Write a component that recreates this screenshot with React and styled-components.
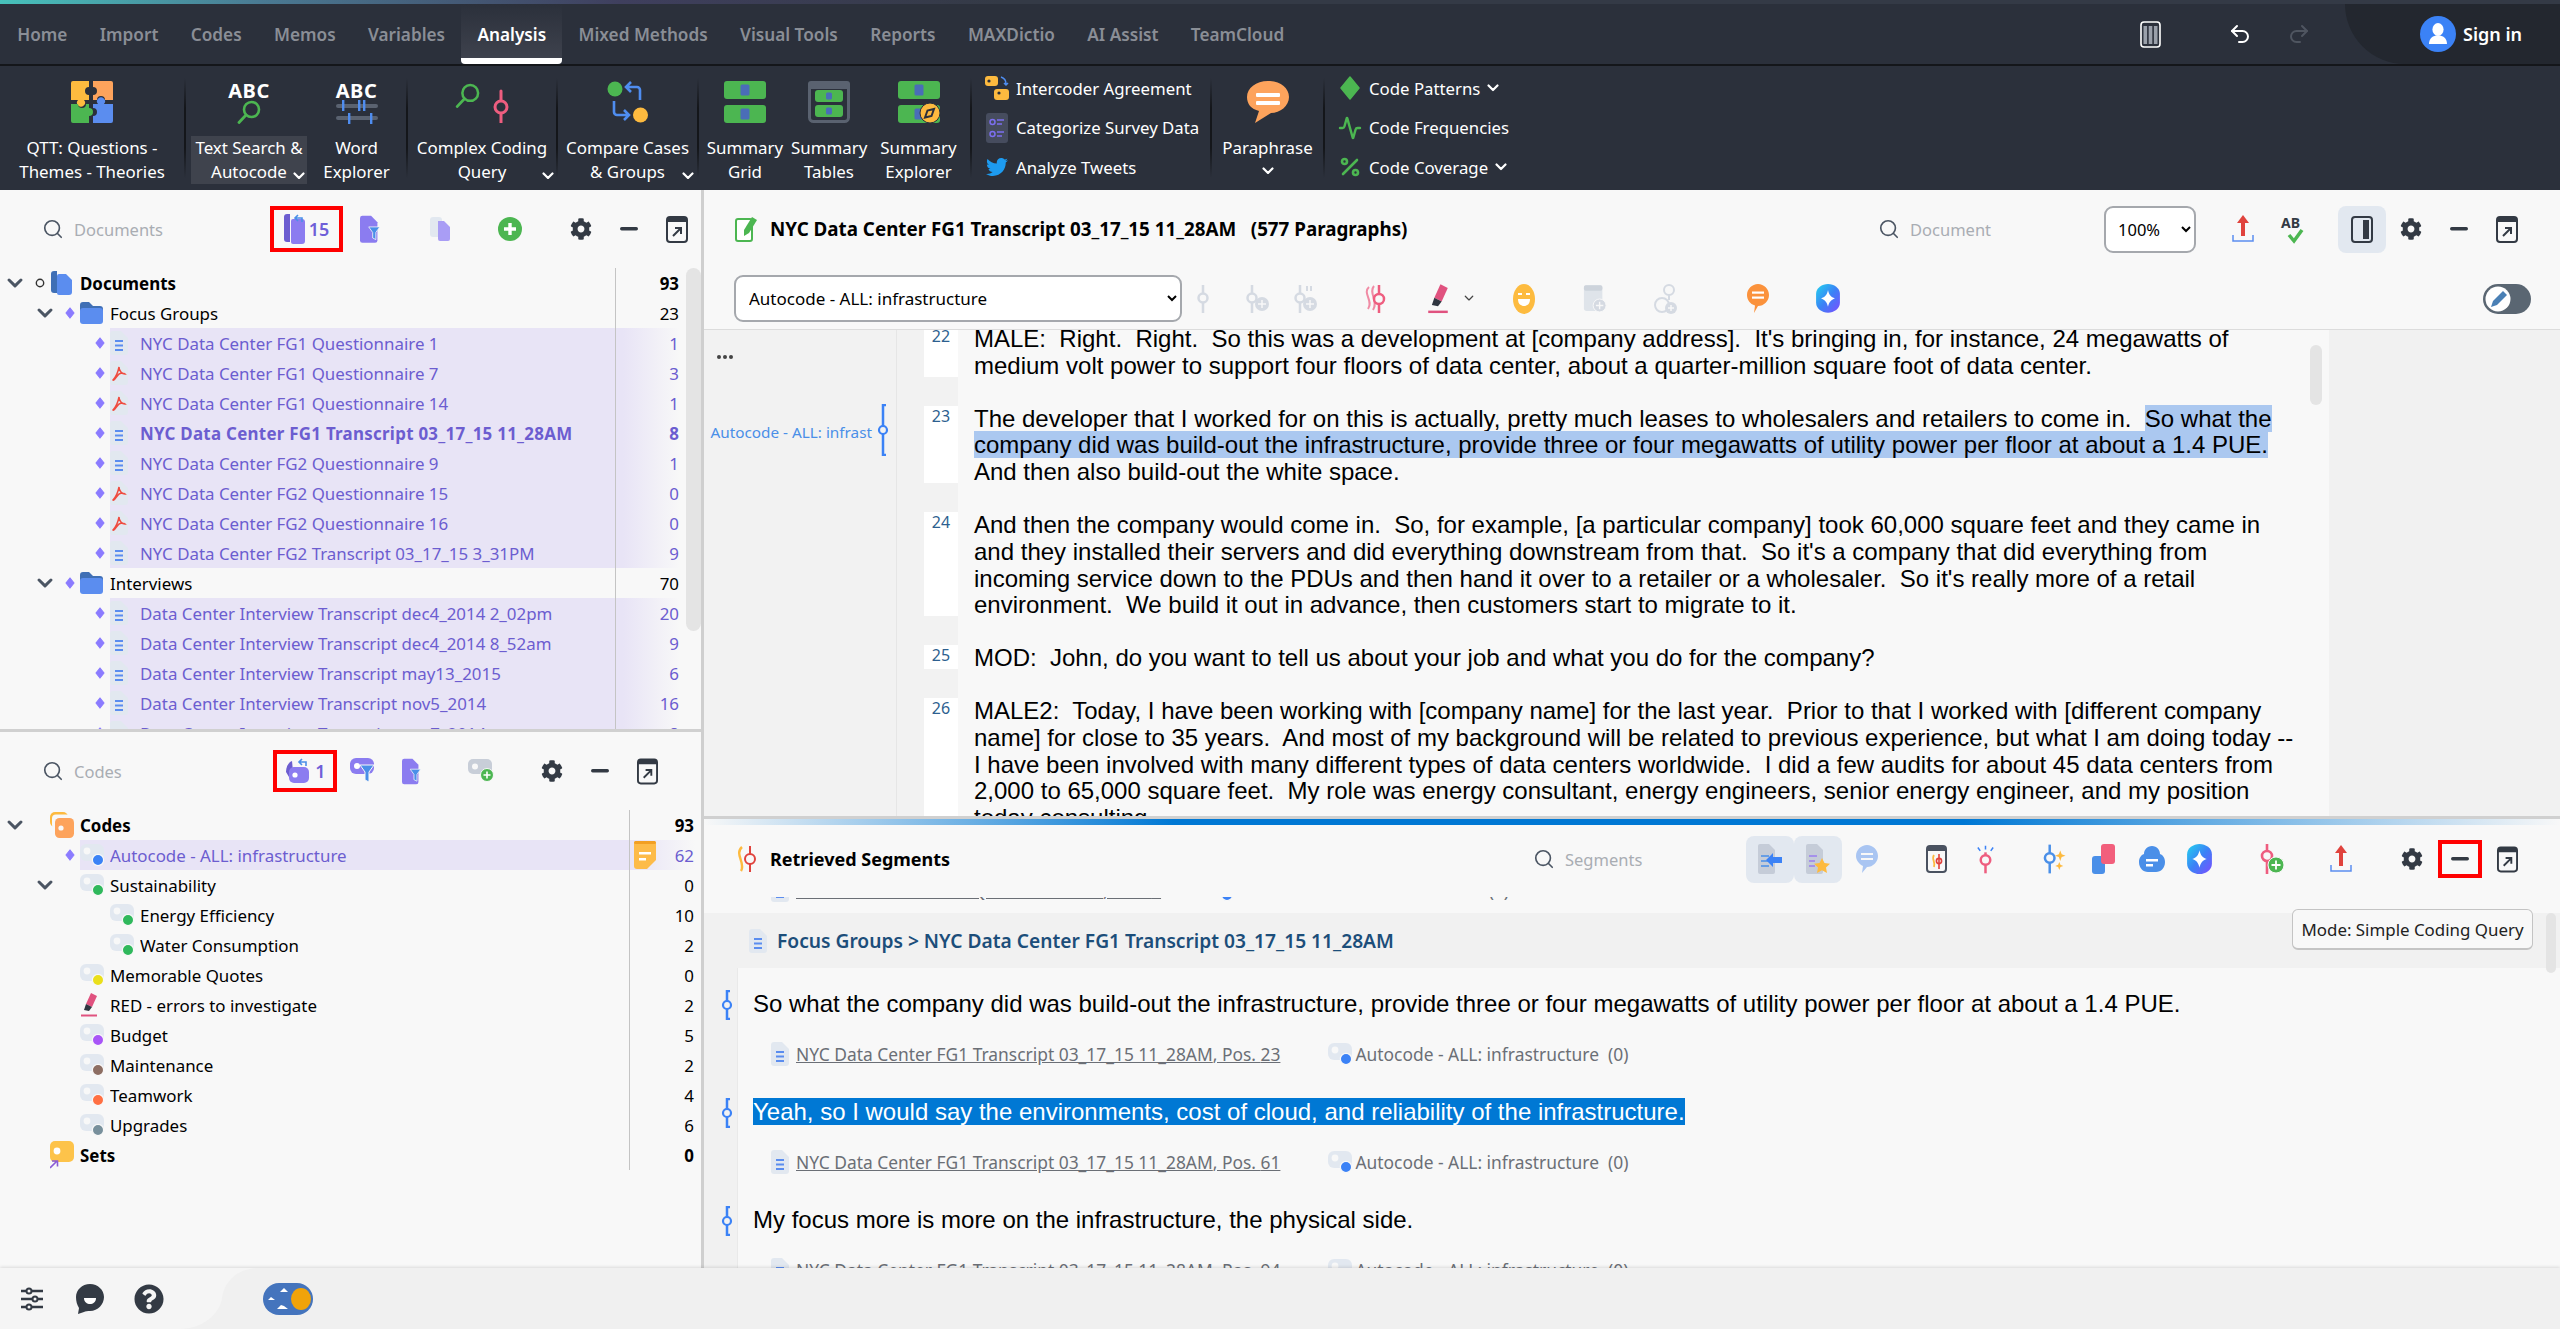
import React from 'react';
import styled, { createGlobalStyle } from 'styled-components';
import { FaCog, FaTwitter, FaQuestionCircle } from 'react-icons/fa';
import { Search, Undo2, Redo2, Activity, Percent } from 'lucide-react';

const UI = '"Noto Sans", "Open Sans", sans-serif';
const DOC = '"Liberation Sans", Arial, sans-serif';

const GlobalStyle = createGlobalStyle`
  html, body { margin: 0; padding: 0; height: 100%; overflow: hidden; }
  body { font-family: ${UI}; background: #f8f8f8; color: #000; }
  #root { height: 100%; }
  * { box-sizing: border-box; }
`;

const Page = styled.div`
  display: flex;
  flex-direction: column;
  height: 100vh;
  overflow: hidden;
`;

const Accent = styled.div`
  height: 4px;
  flex: none;
  background: linear-gradient(90deg, #47c1bb 0, #4a7a93 260px, #3f3f5e 620px, #343a46 1000px);
`;

const TabBar = styled.nav`
  height: 60px;
  flex: none;
  display: flex;
  align-items: stretch;
  background: #2b303b;
  padding-left: 1px;
`;

const Tab = styled.a`
  display: flex;
  align-items: center;
  padding: 6px 16.2px 0;
  font-size: 17.2px;
  font-weight: 600;
  color: ${p => (p.$active ? '#fff' : '#8a8e96')};
  border-bottom: 6px solid ${p => (p.$active ? '#fff' : 'transparent')};
  border-radius: ${p => (p.$active ? '0 0 4px 4px' : '0')};
  background: ${p => (p.$active ? 'linear-gradient(180deg, #2b303b, #3e424d)' : 'none')};
`;

const TabActions = styled.div`
  margin-left: auto;
  display: flex;
  align-items: center;
`;

const TabAction = styled.span`
  display: flex;
  margin-right: ${p => p.$mr}px;
  color: ${p => p.$color || '#fff'};
`;

const SignIn = styled.div`
  width: 215px;
  height: 60px;
  display: flex;
  align-items: center;
  padding-left: 75px;
  gap: 7px;
  background: #23272f;
  border-bottom-left-radius: 60px;
  color: #fff;
  font-weight: 600;
  font-size: 18px;
`;

const Ribbon = styled.div`
  height: 126px;
  flex: none;
  display: flex;
  background: #2b303b;
  border-top: 2px solid #14161a;
  color: #fff;
`;

const Sep = styled.div`
  width: 2px;
  margin: 12px 0;
  background: linear-gradient(180deg, #2b303b, #14161a 30%, #14161a 70%, #2b303b);
`;

const RibbonBtn = styled.div`
  position: relative;
  width: ${p => p.$w}px;
  margin-left: ${p => p.$ml || 0}px;
  display: flex;
  flex-direction: column;
  align-items: center;
  padding-top: 15px;
`;

const RibbonIcon = styled.div`
  height: 55px;
  display: flex;
  flex-direction: column;
  align-items: center;
`;

const AbcMark = styled.span`
  font-size: 20px;
  font-weight: 700;
  line-height: 19px;
  color: #fff;
  letter-spacing: 0.5px;
`;

const RibbonLabel = styled.div`
  align-self: stretch;
  height: 48px;
  font-size: 16.9px;
  line-height: 24px;
  text-align: center;
  white-space: nowrap;
  background: ${p => (p.$active ? '#3f434d' : 'none')};
`;

const LabelChevron = styled.span`
  position: absolute;
  right: ${p => p.$r}px;
  bottom: 11px;
  display: flex;
`;

const CenterChevron = styled.div`
  display: flex;
  justify-content: center;
  padding-top: 7px;
`;

const RibbonList = styled.div`
  display: flex;
  flex-direction: column;
  width: ${p => p.$w}px;
  padding: 10px 0 0 13px;
  gap: 15.5px;
`;

const RibbonItem = styled.div`
  height: 24px;
  display: flex;
  align-items: center;
  gap: 7px;
  font-size: 16.8px;
  white-space: nowrap;
`;

const RibbonItemIcon = styled.span`
  width: 24px;
  height: 24px;
  display: flex;
  align-items: center;
  justify-content: center;
`;

const Main = styled.div`
  flex: 1;
  min-height: 0;
  display: flex;
`;

const LeftColumn = styled.div`
  width: 704px;
  flex: none;
  display: flex;
  flex-direction: column;
  border-right: 3px solid #cfcfcf;
`;

const Pane = styled.section`
  height: ${p => p.$h}px;
  flex: ${p => (p.$h ? 'none' : '1')};
  min-height: 0;
  display: flex;
  flex-direction: column;
  overflow: hidden;
  position: relative;
`;

const HSplit = styled.div`
  height: 3px;
  flex: none;
  background: #d0d0d0;
`;

const PaneHeader = styled.header`
  height: ${p => p.$h}px;
  flex: none;
  display: flex;
  align-items: center;
  padding-left: ${p => p.$pl || 0}px;
  padding-right: ${p => p.$pr || 0}px;
  padding-bottom: ${p => p.$pb || 0}px;
  background: #f8f8f8;
`;

const SearchBox = styled.div`
  width: ${p => p.$w}px;
  flex: none;
  display: flex;
  align-items: center;
  gap: 10px;
  padding-left: ${p => p.$pl || 0}px;
  font-size: 16.5px;
  color: #a9adb3;
`;

const Tool = styled.span`
  width: ${p => p.$w || 24}px;
  margin-left: ${p => p.$ml || 0}px;
  flex: none;
  display: flex;
  justify-content: center;
  align-items: center;
  color: #333a44;
`;

const RedBox = styled.span`
  width: ${p => p.$w}px;
  height: ${p => p.$h}px;
  margin-left: ${p => p.$ml || 0}px;
  flex: none;
  display: flex;
  align-items: center;
  justify-content: center;
  gap: 3px;
  border: 4px solid #f00;
  font-size: 18px;
  font-weight: 600;
  color: #6f5fd8;
`;

const Tree = styled.div`
  flex: 1;
  min-height: 0;
  overflow: hidden;
  padding-right: 6px;
`;

const TreeWrap = styled.div`
  flex: 1;
  min-height: 0;
  display: flex;
`;

const ScrollTrack = styled.div`
  width: 15px;
  flex: none;
`;

const ScrollThumb = styled.div`
  height: ${p => p.$h}px;
  margin-top: ${p => p.$mt || 0}px;
  border-radius: 8px;
  background: #e4e4e4;
`;

const Row = styled.div`
  height: 30px;
  display: flex;
  align-items: stretch;
  padding-left: ${p => p.$level * 30}px;
  font-size: 16.9px;
`;

const ChevronSlot = styled.span`
  width: 30px;
  flex: none;
  display: flex;
  align-items: center;
  justify-content: center;
`;

const BulletSlot = styled.span`
  width: 20px;
  flex: none;
  display: flex;
  align-items: center;
  justify-content: center;
`;

const RowBody = styled.div`
  flex: 1;
  min-width: 0;
  display: flex;
  align-items: center;
  background: ${p => (p.$selected ? 'linear-gradient(90deg, #e8e4f6 90%, #f8f8f8)' : 'none')};
`;

const RowIcon = styled.span`
  width: 30px;
  flex: none;
  display: flex;
  align-items: center;
`;

const RowLabel = styled.span`
  flex: 1;
  min-width: 0;
  white-space: nowrap;
  overflow: hidden;
  font-weight: ${p => (p.$bold ? 700 : 400)};
  letter-spacing: ${p => (p.$bold && p.$selected ? '0.28px' : '0')};
  color: ${p => (p.$selected ? '#6c5dd0' : '#000')};
`;

const Count = styled.span`
  width: ${p => p.$w}px;
  height: 100%;
  flex: none;
  display: flex;
  align-items: center;
  justify-content: space-between;
  padding: 0 1px 0 4px;
  border-left: 1px solid #c4c4c4;
  font-weight: ${p => (p.$bold ? 700 : 400)};
  color: ${p => (p.$selected ? '#6c5dd0' : '#000')};
`;

const CountValue = styled.span`
  margin-left: auto;
`;

const RightColumn = styled.div`
  flex: 1;
  min-width: 0;
  display: flex;
  flex-direction: column;
`;

const TitleGroup = styled.div`
  flex: 1;
  min-width: 0;
  display: flex;
  align-items: center;
  gap: 13px;
  font-size: 18.8px;
  font-weight: 700;
  white-space: pre;
`;

const ZoomSelect = styled.select`
  width: 92px;
  height: 47px;
  flex: none;
  padding-left: 8px;
  border: 2px solid #a5a8ad;
  border-radius: 9px;
  background: #fff;
  font-family: ${UI};
  font-size: 16.5px;
`;

const CodeSelect = styled(ZoomSelect)`
  width: 448px;
  padding-left: 9px;
  font-size: 17px;
`;

const PanelBtn = styled.span`
  width: 48px;
  height: 47px;
  margin-left: ${p => p.$ml || 0}px;
  flex: none;
  display: flex;
  align-items: center;
  justify-content: center;
  border-radius: 8px;
  background: #e2e8f0;
`;

const ToolbarEnd = styled.span`
  margin-left: auto;
  display: flex;
`;

const CodingBar = styled(PaneHeader)`
  border-bottom: 1px solid #dcdcdc;
`;

const DocArea = styled.div`
  flex: 1;
  min-height: 0;
  display: flex;
  overflow: hidden;
`;

const Gutter = styled.aside`
  width: 193px;
  flex: none;
  background: #f2f2f2;
  border-right: 1px solid #e6e6e6;
  display: flex;
  flex-direction: column;
`;

const MoreDots = styled.div`
  display: flex;
  gap: 2px;
  padding: 25px 0 0 13px;
`;

const Dot = styled.span`
  width: 4px;
  height: 4px;
  border-radius: 50%;
  background: #444;
`;

const CodeMark = styled.div`
  margin-top: 45px;
  height: 52px;
  display: flex;
  align-items: center;
  justify-content: flex-end;
  padding-right: 6px;
  font-size: 15.3px;
  color: #4a8fe8;
  white-space: nowrap;
  overflow: hidden;
`;

const MarkText = styled.span`
  padding-top: 3px;
  margin-right: 4px;
`;

const DocBody = styled.div`
  flex: 1;
  min-width: 0;
  background: linear-gradient(90deg, #f2f2f2 61px, #f8f8f8 61px);
`;

const Paragraph = styled.div`
  display: flex;
  padding-left: 27px;
  margin-top: ${p => p.$mt || 0}px;
  margin-bottom: 26px;
`;

const ParaNumber = styled.div`
  width: 34px;
  flex: none;
  margin-bottom: 3px;
  background: #fff;
  text-align: center;
  font-size: 16px;
  line-height: 20px;
  color: #2d5f8f;
`;

const ParaText = styled.div`
  padding-left: 16px;
  font-family: ${DOC};
  font-size: 24px;
  line-height: 26.8px;
  white-space: pre;
`;

const Line = styled.div``;

const Hl = styled.span`
  background: #abc8f0;
`;

const DocScroll = styled.div`
  width: 21px;
  flex: none;
  padding: 15px 7px 0 2px;
  background: #f8f8f8;
`;

const DocMargin = styled.div`
  width: 231px;
  flex: none;
  background: #f1f1f1;
`;

const BlueSplit = styled.div`
  flex: none;
  height: 9px;
  border-top: 3px solid #d0d0d0;
  background: linear-gradient(90deg, #f8f8f8 0, #0078d4 470px, #0078d4 1260px, #f8f8f8 100%);
`;

const SegTitle = styled.span`
  flex: 1;
  display: flex;
  align-items: center;
  gap: 11px;
  font-size: 18px;
  font-weight: 700;
`;

const SegList = styled.div`
  flex: 1;
  min-height: 0;
  overflow: hidden;
  position: relative;
`;

const SegStrip = styled.div`
  height: 16px;
  overflow: hidden;
  padding-left: 49px;
`;

const SegGroupHeader = styled.div`
  height: 55px;
  display: flex;
  align-items: center;
  gap: 10px;
  padding-left: 45px;
  background: #f1f1f1;
  font-size: 19.2px;
  font-weight: 600;
  color: #1c4e7a;
`;

const Segment = styled.div`
  display: flex;
  background: linear-gradient(90deg, #f1f1f1 33px, #e9e9e9 33px, #e9e9e9 34px, #f8f8f8 34px);
  height: ${p => p.$h || 108}px;
`;

const SegMarker = styled.span`
  width: 34px;
  flex: none;
  display: flex;
  padding: 22px 0 0 16px;
  height: 60px;
`;

const SegContent = styled.div`
  flex: 1;
  min-width: 0;
  padding: 23px 0 0 15px;
`;

const SegText = styled.div`
  font-family: ${DOC};
  font-size: 24px;
  line-height: 26.8px;
  white-space: pre;
`;

const SelectedText = styled.span`
  background: #0078d4;
  color: #fff;
`;

const SegMeta = styled.div`
  display: flex;
  align-items: center;
  height: 28px;
  margin-top: ${p => p.$mt || 0}px;
  padding-left: 18px;
  font-size: 17.4px;
  color: #6b6f76;
  white-space: nowrap;
`;

const MetaLink = styled.span`
  margin-left: 7px;
  text-decoration: underline;
`;

const MetaCode = styled.span`
  margin-left: 48px;
  display: flex;
  align-items: center;
  gap: 3px;
  white-space: pre;
`;

const Tooltip = styled.div`
  position: absolute;
  top: 12px;
  left: 1588px;
  width: 241px;
  height: 41px;
  display: flex;
  align-items: center;
  justify-content: center;
  background: #f8f8f8;
  border: 1px solid #c4c4c4;
  border-bottom-width: 2px;
  border-radius: 6px;
  font-size: 16.9px;
  color: #222;
  white-space: nowrap;
`;

const SegThumb = styled.div`
  position: absolute;
  top: 16px;
  right: 4px;
  width: 10px;
  height: 60px;
  border-radius: 6px;
  background: #e4e4e4;
`;

const BottomBar = styled.footer`
  height: 61px;
  flex: none;
  display: flex;
  align-items: center;
  background: #f0f0f0;
  box-shadow: 0 -1px 3px rgba(0, 0, 0, 0.12);
  position: relative;
`;

const Dock = styled.div`
  width: 180px;
  height: 100%;
  flex: none;
  display: flex;
  align-items: center;
  padding-left: 21px;
  background: #f5f5f5;
`;

const DockCurve = styled.svg`
  flex: none;
  width: 83px;
  height: 61px;
`;

const ThemeToggle = styled.span`
  display: flex;
`;

/* ---------- icons ---------- */

const Chevron = ({ size = 16, color = '#4b5563', sw = 3 }) => (
  <svg width={size} height={size * 0.62} viewBox="0 0 16 10" fill="none">
    <path d="M2 2l6 6 6-6" stroke={color} strokeWidth={sw} strokeLinecap="round" strokeLinejoin="round" />
  </svg>
);

const Diamond = () => (
  <svg width="10" height="12" viewBox="0 0 10 12">
    <path d="M5 1l4 5-4 5-4-5z" fill="#8b7bff" stroke="#8b7bff" strokeWidth="1.2" strokeLinejoin="round" />
  </svg>
);

const RingBullet = () => (
  <svg width="10" height="10" viewBox="0 0 10 10">
    <circle cx="5" cy="5" r="3.7" fill="none" stroke="#333" strokeWidth="1.4" />
  </svg>
);

const DocIcon = ({ pdf }) => (
  <svg width="18" height="24" viewBox="0 0 18 24">
    <path d="M3 0h8l7 7v14a3 3 0 0 1-3 3H3a3 3 0 0 1-3-3V3a3 3 0 0 1 3-3z" fill="#e2e8f0" />
    {pdf ? (
      <path d="M9 6c-1 5-3 10-6 13 1 1 3-3 6-6 2-1 5-1 6 0-3 0-6-3-6-7z" fill="none" stroke="#ef4b3f" strokeWidth="1.5" />
    ) : (
      <g fill="#5b8def">
        <rect x="5" y="9" width="8" height="2" />
        <rect x="5" y="13.5" width="8" height="2" />
        <rect x="5" y="18" width="8" height="2" />
      </g>
    )}
  </svg>
);

const DocStack = () => (
  <svg width="23" height="24" viewBox="0 0 23 24">
    <path d="M4 0h3v22H4a3 3 0 0 1-3-3V3a3 3 0 0 1 3-3z" fill="#3f6fb5" />
    <path d="M9 3h7l6 6v12a3 3 0 0 1-3 3H9a2 2 0 0 1-2-2V5a2 2 0 0 1 2-2z" fill="#5b8def" />
  </svg>
);

const Folder = () => (
  <svg width="23" height="22" viewBox="0 0 23 22">
    <path d="M3 0h6l4 4h7a3 3 0 0 1 3 3v2H0V3a3 3 0 0 1 3-3z" fill="#3f6fb5" />
    <rect y="6" width="23" height="16" rx="3" fill="#5b8def" />
  </svg>
);

const CodeTag = ({ color = '#3b82f6' }) => (
  <svg width="24" height="24" viewBox="0 0 24 24">
    <rect y="1" width="24" height="17" rx="6" fill="#e2e8f0" />
    <circle cx="7" cy="8" r="3.4" fill="#f8f8f8" />
    <circle cx="18" cy="17" r="5.6" fill={color} stroke="#f8f8f8" strokeWidth="1.2" />
  </svg>
);

const CodesRoot = () => (
  <svg width="24" height="26" viewBox="0 0 24 26">
    <rect y="0" width="18" height="15" rx="5" fill="#fdba3f" />
    <rect x="2" y="2.5" width="18" height="14" rx="4" fill="#f8f8f8" />
    <rect x="5" y="6" width="19" height="20" rx="4.5" fill="#fda35c" />
    <circle cx="11" cy="16" r="2.6" fill="#f8f8f8" />
  </svg>
);

const SetsIcon = () => (
  <svg width="24" height="28" viewBox="0 0 24 28">
    <rect width="24" height="21" rx="5" fill="#fdc34a" />
    <circle cx="7" cy="10" r="3.4" fill="#fff" />
    <path d="M0 27l7-7M2 20h5.5v5.5" fill="none" stroke="#8a5cd6" strokeWidth="1.6" />
  </svg>
);

const Marker = ({ w = 18, h = 24 }) => (
  <svg width={w} height={h} viewBox="0 0 18 24">
    <path d="M11 0l6 3-5 11-6-3z" fill="#e0527f" />
    <path d="M6 11l6 3-3 4-5-1z" fill="#2f3640" />
    <rect x="1" y="21.5" width="16" height="2" fill="#e0527f" />
  </svg>
);

const MemoNote = () => (
  <svg width="22" height="28" viewBox="0 0 22 28">
    <path d="M3 0h16a3 3 0 0 1 3 3v16l-9 9H3a3 3 0 0 1-3-3V3a3 3 0 0 1 3-3z" fill="#fdbb4a" />
    <rect width="22" height="3" rx="1.5" fill="#f29f24" />
    <rect x="5" y="11" width="12" height="2.5" fill="#fff" />
    <rect x="5" y="17" width="7" height="2.5" fill="#fff" />
  </svg>
);

const Gear = ({ size = 22 }) => <FaCog size={size} color="#333a44" />;

const MinusBar = ({ w = 18 }) => (
  <svg width={w} height="4" viewBox="0 0 18 4">
    <rect width="18" height="3.4" rx="1.7" fill="#333a44" />
  </svg>
);

const Popout = () => (
  <svg width="22" height="27" viewBox="0 0 22 27">
    <rect x="1" y="1" width="20" height="25" rx="3" fill="none" stroke="#333a44" strokeWidth="2" />
    <path d="M1 4a3 3 0 0 1 3-3h14a3 3 0 0 1 3 3v2H1z" fill="#333a44" />
    <path d="M7 20l8-8M9 12h6v6" fill="none" stroke="#333a44" strokeWidth="2" />
  </svg>
);

const Upload = ({ color = '#e0433d' }) => (
  <svg width="22" height="28" viewBox="0 0 22 28">
    <path d="M11 0l6 8h-4v13H9V8H5z" fill={color} />
    <path d="M1 20v6h20v-6" fill="none" stroke="#5b8def" strokeWidth="1.5" />
  </svg>
);

const ColumnsIcon = () => (
  <svg width="21" height="27" viewBox="0 0 21 27">
    <rect x="1" y="1" width="19" height="25" rx="3" fill="none" stroke="#fff" strokeWidth="1.6" />
    <g fill="#9aa0aa">
      <rect x="3.5" y="5" width="3.6" height="18" />
      <rect x="8.7" y="5" width="3.6" height="18" />
      <rect x="13.9" y="5" width="3.6" height="18" />
    </g>
  </svg>
);

const Avatar = () => (
  <svg width="36" height="36" viewBox="0 0 36 36">
    <circle cx="18" cy="18" r="18" fill="#3b82f6" />
    <ellipse cx="18" cy="13.5" rx="5.6" ry="6.4" fill="#fff" />
    <path d="M9 28c0-6 4-8.5 9-8.5s9 2.500 9 8.500z" fill="#fff" />
  </svg>
);

const Puzzle = () => (
  <svg width="42" height="42" viewBox="0 0 42 42">
    <path d="M2 0h16v6a4 4 0 0 0 0 8v5h-5a4 4 0 1 1-6 0H0V2a2 2 0 0 1 2-2z" fill="#fdbb3f" />
    <path d="M22 0h18a2 2 0 0 1 2 2v17h-8a4 4 0 0 0-8 0h-4v-5a4 4 0 0 0 0-8z" fill="#fda35c" />
    <path d="M0 23h7a4 4 0 1 0 8 0h3v4a4 4 0 0 1 0 8v7H2a2 2 0 0 1-2-2z" fill="#4cb651" />
    <path d="M22 23h5a4 4 0 1 1 6 0h9v17a2 2 0 0 1-2 2H22v-7a4 4 0 0 0 0-8z" fill="#5b8def" />
  </svg>
);

const GreenLens = ({ w = 24 }) => (
  <svg width={w} height={w} viewBox="0 0 24 24">
    <circle cx="14.500" cy="9.500" r="7.500" fill="none" stroke="#4cb651" strokeWidth="2.600" />
    <path d="M9 15l-7 7.500" stroke="#4cb651" strokeWidth="2.800" strokeLinecap="round" />
  </svg>
);

const WordBars = () => (
  <svg width="42" height="24" viewBox="0 0 42 24">
    <g fill="#5a6270">
      <rect y="4" width="42" height="4" rx="2" />
      <rect y="16" width="42" height="4" rx="2" />
    </g>
    <g fill="#4f8df0">
      <rect x="6" y="0" width="2.400" height="11" />
      <rect x="22" y="0" width="2.400" height="11" />
      <rect x="27" y="0" width="2.400" height="11" />
      <rect x="12" y="13" width="2.400" height="11" />
      <rect x="34" y="13" width="2.400" height="11" />
    </g>
  </svg>
);

const ComplexIcon = () => (
  <svg width="54" height="42" viewBox="0 0 54 42">
    <g transform="translate(0,2) scale(1.05)">
      <circle cx="14.500" cy="9.500" r="7.500" fill="none" stroke="#4cb651" strokeWidth="2.400" />
      <path d="M9 15l-7 7.500" stroke="#4cb651" strokeWidth="2.600" strokeLinecap="round" />
    </g>
    <path d="M46 10v32" stroke="#ee5d7f" strokeWidth="3" strokeLinecap="round" />
    <circle cx="46" cy="26" r="6" fill="#2b303b" stroke="#ee5d7f" strokeWidth="3" />
  </svg>
);

const CompareIcon = () => (
  <svg width="42" height="42" viewBox="0 0 42 42">
    <circle cx="8" cy="8" r="7.500" fill="#4cb651" />
    <circle cx="33.500" cy="34" r="7.500" fill="#fdba3f" />
    <path d="M33 19V9a3 3 0 0 0-3-3h-10M24 1l-5 5 5 5" fill="none" stroke="#4f8df0" strokeWidth="2.600" />
    <path d="M7 20v11a3 3 0 0 0 3 3h12M17 29l5 5-5 5" fill="none" stroke="#4f8df0" strokeWidth="2.600" />
  </svg>
);

const GridCard = ({ y, x = 0, w = 42, h = 18, inner = 9 }) => (
  <g>
    <rect x={x} y={y} width={w} height={h} rx="3" fill="#4cb651" />
    <rect x={x + w / 2 - inner / 2} y={y + h / 2 - inner * 0.6} width={inner} height={inner * 1.2} rx="1.500" fill="#4a6db8" />
  </g>
);

const SummaryGridIcon = () => (
  <svg width="42" height="42" viewBox="0 0 42 42">
    <GridCard y={0} />
    <GridCard y={24} />
  </svg>
);

const SummaryTablesIcon = () => (
  <svg width="42" height="42" viewBox="0 0 42 42">
    <rect x="1.500" y="1.500" width="39" height="39" rx="4" fill="none" stroke="#5a6270" strokeWidth="3" />
    <rect y="0" width="42" height="8" rx="3" fill="#5a6270" />
    <GridCard x={7} y={9} w={28} h={12} inner={6} />
    <GridCard x={7} y={24} w={28} h={12} inner={6} />
  </svg>
);

const SummaryExplorerIcon = () => (
  <svg width="42" height="42" viewBox="0 0 42 42">
    <GridCard y={0} />
    <GridCard y={24} />
    <circle cx="32" cy="32" r="10" fill="#fdba3f" stroke="#2b303b" strokeWidth="1" />
    <path d="M36 28l-2.500 7-6.500 1.500 2.500-7z" fill="none" stroke="#2b303b" strokeWidth="2" />
  </svg>
);

const IntercoderIcon = () => (
  <svg width="24" height="24" viewBox="0 0 24 24">
    <rect y="0" width="13" height="10" rx="3" fill="#fdba3f" />
    <circle cx="4" cy="5" r="1.600" fill="#2b303b" />
    <rect x="9" y="13" width="15" height="11" rx="3" fill="#fdba3f" />
    <circle cx="14" cy="17" r="1.600" fill="#2b303b" />
    <path d="M16 1c3 1 5 3 5 7M19 7l2 2 2-2" fill="none" stroke="#4f8df0" strokeWidth="1.500" />
  </svg>
);

const SurveyIcon = () => (
  <svg width="22" height="30" viewBox="0 0 22 30">
    <rect width="22" height="30" rx="3" fill="#464c5e" />
    <g fill="none" stroke="#7c6ff0" strokeWidth="1.500">
      <circle cx="6.500" cy="9" r="2.500" />
      <circle cx="6.500" cy="21" r="2.500" />
      <path d="M11 7h7M11 11h5M11 19h7M11 23h5" />
    </g>
  </svg>
);

const ParaphraseIcon = () => (
  <svg width="42" height="42" viewBox="0 0 42 42">
    <path d="M21 0c12 0 21 7 21 16S33 32 24 32L8 42l4-12C4 28 0 23 0 16 0 7 9 0 21 0z" fill="#fda35c" />
    <rect x="9" y="12" width="24" height="4" rx="1" fill="#fff" />
    <rect x="9" y="20" width="24" height="4" rx="1" fill="#fff" />
  </svg>
);

const GreenDiamond = () => (
  <svg width="20" height="24" viewBox="0 0 20 24">
    <path d="M10 1l9 11-9 11-9-11z" fill="#4cb651" stroke="#4cb651" strokeWidth="1.500" strokeLinejoin="round" />
  </svg>
);

const Bracket = ({ h = 30, color = '#3b82f6' }) => (
  <svg width="14" height={h} viewBox={`0 0 14 ${h}`} fill="none">
    <path d={`M10 1H7v${h - 2}h3`} stroke={color} strokeWidth="2.500" />
    <circle cx="7" cy={h / 2} r="4" fill="#f2f2f2" stroke={color} strokeWidth="2.200" />
  </svg>
);

const TitleEdit = () => (
  <svg width="22" height="25" viewBox="0 0 22 25">
    <rect x="1" y="2" width="16" height="22" rx="2" fill="#fff" stroke="#4cb651" strokeWidth="2" />
    <path d="M17 0l5 3-8 13-5 3 0-6z" fill="#4cb651" />
  </svg>
);

const MarkerGhost = ({ plus, dots }) => (
  <svg width="24" height="30" viewBox="0 0 24 30" fill="none">
    <path d="M7 1v28" stroke="#d5dae2" strokeWidth="2.500" />
    <circle cx="7" cy="14" r="4.500" fill="#f8f8f8" stroke="#d5dae2" strokeWidth="2.500" />
    {plus && <circle cx="17" cy="20" r="7" fill="#d5dae2" />}
    {plus && <path d="M17 16v8M13 20h8" stroke="#f8f8f8" strokeWidth="1.500" />}
    {dots && <path d="M14 2v5M18 2v5" stroke="#d5dae2" strokeWidth="2" />}
  </svg>
);

const PinkWave = () => (
  <svg width="24" height="30" viewBox="0 0 24 30" fill="none">
    <g stroke="#f08ca5" strokeWidth="2">
      <path d="M7 3c-7 6 5 14-1 22M12 2c-6 7 5 15-1 24" />
    </g>
    <path d="M17 1v28" stroke="#ee5d7f" strokeWidth="2.500" />
    <circle cx="17" cy="15" r="5" fill="#f8f8f8" stroke="#ee5d7f" strokeWidth="2.500" />
  </svg>
);

const Smile = () => (
  <svg width="22" height="30" viewBox="0 0 22 30">
    <ellipse cx="11" cy="15" rx="11" ry="15" fill="#fdbb3f" />
    <path d="M5 10h4M13 10h4" stroke="#fff" strokeWidth="2" />
    <path d="M5 15h12c0 5-3 7-6 7s-6-2-6-7z" fill="#fff" />
  </svg>
);

const GhostWindow = () => (
  <svg width="26" height="32" viewBox="0 0 26 32">
    <rect x="1" y="1" width="20" height="28" rx="3" fill="#dfe4ea" />
    <rect x="1" y="1" width="20" height="6" rx="2" fill="#cdd3db" />
    <circle cx="18" cy="23" r="7" fill="#d5dae2" stroke="#f8f8f8" />
    <path d="M18 19v8M14 23h8" stroke="#f8f8f8" strokeWidth="1.500" />
  </svg>
);

const GhostLink = () => (
  <svg width="24" height="32" viewBox="0 0 24 32" fill="none">
    <circle cx="15" cy="7" r="5" stroke="#d5dae2" strokeWidth="2" />
    <path d="M15 12v5" stroke="#d5dae2" strokeWidth="2" />
    <circle cx="8" cy="22" r="7" stroke="#d5dae2" strokeWidth="2" />
    <circle cx="17" cy="25" r="6" fill="#d5dae2" />
    <path d="M17 22v6M14 25h6" stroke="#f8f8f8" strokeWidth="1.500" />
  </svg>
);

const OrangeBubble = () => (
  <svg width="22" height="30" viewBox="0 0 22 30">
    <path d="M11 0c6 0 11 5 11 11s-5 11-11 11l-4 7 1-7.500C3 20 0 16 0 11 0 5 5 0 11 0z" fill="#fb923c" />
    <rect x="5" y="7.500" width="12" height="2.200" fill="#fff" />
    <rect x="5" y="12.500" width="12" height="2.200" fill="#fff" />
  </svg>
);

const AiBadge = ({ w = 24 }) => (
  <svg width={w} height={w * 1.2} viewBox="0 0 24 29">
    <defs>
      <linearGradient id="aiGrad" x1="0" y1="0" x2="1" y2="1">
        <stop offset="0" stopColor="#22d3ee" />
        <stop offset="0.5" stopColor="#3b82f6" />
        <stop offset="1" stopColor="#7c4dff" />
      </linearGradient>
    </defs>
    <path d="M12 0c6 0 12 4 12 10v9c0 6-6 10-12 10S0 25 0 19v-9C0 4 6 0 12 0z" fill="url(#aiGrad)" />
    <path d="M12 6c1 5 3 7 7 8.500-4 1.500-6 3.500-7 8.500-1-5-3-7-7-8.500 4-1.500 6-3.500 7-8.500z" fill="#fff" />
  </svg>
);

const PanelIcon = () => (
  <svg width="22" height="27" viewBox="0 0 22 27">
    <rect x="1" y="1" width="20" height="25" rx="3" fill="none" stroke="#333a44" strokeWidth="2" />
    <rect x="12" y="4" width="6" height="19" fill="#333a44" />
  </svg>
);

const AbCheck = () => (
  <svg width="24" height="30" viewBox="0 0 24 30">
    <text x="1" y="14" fontFamily={UI} fontSize="14" fontWeight="700" fill="#333a44">AB</text>
    <path d="M9 21l5 6 8-11" fill="none" stroke="#4cb651" strokeWidth="3.500" />
  </svg>
);

const EditToggle = () => (
  <svg width="48" height="30" viewBox="0 0 48 30">
    <rect width="48" height="30" rx="15" fill="#5a6672" />
    <circle cx="15" cy="15" r="12.500" fill="#fff" />
    <path d="M8 23l2-6 10-10 4 4-10 10z" fill="#4a80b5" />
  </svg>
);

const DocFilterIcon = ({ scale = 1 }) => (
  <svg width={22 * scale} height={34 * scale} viewBox="0 0 25 34">
    <path d="M3 0h11l8 8v23a3 3 0 0 1-3 3H3a3 3 0 0 1-3-3V3a3 3 0 0 1 3-3z" fill="#8b7cf0" />
    <path d="M11 14h14l-5 7v9l-4-2v-7z" fill="#4a8fe8" stroke="#f8f8f8" strokeWidth="1" />
  </svg>
);

const ActivatedDocs = () => (
  <svg width="22" height="30" viewBox="0 0 22 30">
    <path d="M3 0h3v28H3a3 3 0 0 1-3-3V3a3 3 0 0 1 3-3z" fill="#6c5dd0" />
    <path d="M9 5h9a3 3 0 0 1 3 3v19a3 3 0 0 1-3 3H9a2 2 0 0 1-2-2V7a2 2 0 0 1 2-2z" fill="#8b7cf0" />
    <path d="M18 8V4h-7M14 1l-3 3 3 3" fill="none" stroke="#4a8fe8" strokeWidth="1.600" />
  </svg>
);

const PaleDoc = () => (
  <svg width="20" height="24" viewBox="0 0 20 24">
    <rect width="12" height="20" rx="3" fill="#e2e8f0" />
    <path d="M8 4h6l6 6v12a2 2 0 0 1-2 2h-8a2 2 0 0 1-2-2z" fill="#a99df5" />
  </svg>
);

const GreenPlus = () => (
  <svg width="24" height="24" viewBox="0 0 24 24">
    <circle cx="12" cy="12" r="12" fill="#4cb651" />
    <path d="M12 6v12M6 12h12" stroke="#fff" strokeWidth="3.400" />
  </svg>
);

const ActivatedCodes = () => (
  <svg width="28" height="26" viewBox="0 0 28 26">
    <path d="M2 14C2 8 5 4 8 3l1 10-4 6z" fill="#6c5dd0" />
    <rect x="5" y="9" width="20" height="16" rx="5" fill="#8b7cf0" />
    <circle cx="11" cy="17" r="2.600" fill="#fff" />
    <path d="M22 8V4h-7M18 1l-3 3 3 3" fill="none" stroke="#4a8fe8" strokeWidth="1.600" />
  </svg>
);

const CodeFilter = () => (
  <svg width="24" height="26" viewBox="0 0 24 26">
    <rect width="24" height="16" rx="6" fill="#8b7cf0" />
    <circle cx="7" cy="8" r="3" fill="#fff" />
    <path d="M10 7h14l-5 7v10l-4-2v-8z" fill="#4a8fe8" stroke="#f8f8f8" />
  </svg>
);

const CodeAddGhost = () => (
  <svg width="26" height="24" viewBox="0 0 26 24">
    <rect width="24" height="15" rx="5" fill="#c8ced8" />
    <circle cx="7" cy="7.500" r="3" fill="#f8f8f8" />
    <circle cx="19" cy="16" r="6.500" fill="#4cb651" stroke="#f8f8f8" />
    <path d="M19 12.500v7M15.500 16h7" stroke="#fff" strokeWidth="1.600" />
  </svg>
);

const RetrievedIcon = () => (
  <svg width="24" height="26" viewBox="0 0 24 26" fill="none">
    <path d="M7 1c-8 7 4 16-1 24" stroke="#fdba3f" strokeWidth="2.400" />
    <path d="M15 0v26" stroke="#e0433d" strokeWidth="2" />
    <circle cx="15" cy="13" r="5" fill="#f8f8f8" stroke="#e0433d" strokeWidth="2" />
  </svg>
);

const RetrieveDoc = () => (
  <svg width="24" height="30" viewBox="0 0 24 30">
    <path d="M2 0h9l6 6v22a2 2 0 0 1-2 2H2a2 2 0 0 1-2-2V2a2 2 0 0 1 2-2z" fill="#c5ccd8" />
    <path d="M3 12h8M3 17h8M3 22h8" stroke="#4a8fe8" strokeWidth="1.500" />
    <path d="M24 13h-9v-4l-7 7 7 7v-4h9z" fill="#3b82f6" />
  </svg>
);

const FavDoc = () => (
  <svg width="24" height="30" viewBox="0 0 24 30">
    <path d="M2 0h9l6 6v22a2 2 0 0 1-2 2H2a2 2 0 0 1-2-2V2a2 2 0 0 1 2-2z" fill="#c5ccd8" />
    <path d="M3 12h8M3 17h6M3 22h6" stroke="#9a7df0" strokeWidth="1.500" />
    <path d="M16 14l2.500 5 5.500.7-4 3.800 1 5.500-5-2.700-5 2.700 1-5.500-4-3.800 5.500-.7z" fill="#fdba3f" />
  </svg>
);

const PaleBubble = () => (
  <svg width="24" height="30" viewBox="0 0 24 30">
    <path d="M12 1c6 0 11 5 11 11s-5 11-11 11l-5 6 1-7C4 20 1 16 1 12 1 6 6 1 12 1z" fill="#a9c5f2" />
    <rect x="6" y="9" width="12" height="2" fill="#f8f8f8" />
    <rect x="6" y="14" width="12" height="2" fill="#f8f8f8" />
  </svg>
);

const WindowMark = () => (
  <svg width="21" height="28" viewBox="0 0 21 28" fill="none">
    <rect x="1" y="1" width="19" height="26" rx="3" stroke="#4a5260" strokeWidth="2" />
    <rect x="1" y="1" width="19" height="5" fill="#4a5260" />
    <path d="M8 10c-3 4 2 7 0 12" stroke="#fdba3f" strokeWidth="1.800" />
    <path d="M13 9v15" stroke="#e0433d" strokeWidth="1.600" />
    <circle cx="13" cy="16" r="2.600" stroke="#e0433d" strokeWidth="1.600" />
  </svg>
);

const SparkMark = () => (
  <svg width="22" height="30" viewBox="0 0 22 30" fill="none">
    <path d="M11 8v22" stroke="#ee5d7f" strokeWidth="2.600" />
    <circle cx="11" cy="16" r="5" fill="#f8f8f8" stroke="#ee5d7f" strokeWidth="2.600" />
    <path d="M11 1v4M3 3l2.500 3.500M19 3l-2.500 3.500" stroke="#3b82f6" strokeWidth="1.600" />
  </svg>
);

const AiMark = () => (
  <svg width="24" height="30" viewBox="0 0 24 30" fill="none">
    <path d="M7 0v30" stroke="#4a8fe8" strokeWidth="2.600" />
    <circle cx="7" cy="14" r="5" fill="#f8f8f8" stroke="#4a8fe8" strokeWidth="2.600" />
    <path d="M18 6l1.500 4 4 1.500-4 1.500-1.500 4-1.500-4-4-1.500 4-1.500zM17 18l1.200 3 3 1.200-3 1.200-1.200 3-1.200-3-3-1.200 3-1.200z" fill="#fdba3f" />
  </svg>
);

const DupSquares = () => (
  <svg width="23" height="30" viewBox="0 0 23 30">
    <rect x="0" y="12" width="13" height="18" rx="3" fill="#4a8fe8" />
    <rect x="9" y="0" width="14" height="20" rx="3" fill="#f25f7c" />
  </svg>
);

const CloudMark = () => (
  <svg width="26" height="26" viewBox="0 0 26 26">
    <path d="M13 0c5 0 8 4 8 8 3 1 5 4 5 8 0 6-4 10-9 10H9c-5 0-9-4-9-10 0-4 2-7 5-8 0-4 3-8 8-8z" fill="#4a8fe8" />
    <rect x="7" y="13" width="12" height="2.500" fill="#fff" />
    <rect x="7" y="18" width="7" height="2.500" fill="#fff" />
  </svg>
);

const MarkPlus = () => (
  <svg width="24" height="30" viewBox="0 0 24 30" fill="none">
    <path d="M7 0v30" stroke="#ee5d7f" strokeWidth="2.600" />
    <circle cx="7" cy="12" r="5" fill="#f8f8f8" stroke="#ee5d7f" strokeWidth="2.600" />
    <circle cx="16" cy="21" r="8" fill="#4cb651" stroke="#f8f8f8" />
    <path d="M16 16.500v9M11.500 21h9" stroke="#fff" strokeWidth="1.800" />
  </svg>
);

const Sliders = () => (
  <svg width="22" height="26" viewBox="0 0 22 26" fill="none" stroke="#333a44" strokeWidth="2.400">
    <path d="M0 5h22M0 13h22M0 21h22" />
    <circle cx="8" cy="5" r="2.500" fill="#f5f5f5" strokeWidth="2" />
    <circle cx="14" cy="13" r="2.500" fill="#f5f5f5" strokeWidth="2" />
    <circle cx="8" cy="21" r="2.500" fill="#f5f5f5" strokeWidth="2" />
  </svg>
);

const ChatFace = () => (
  <svg width="28" height="30" viewBox="0 0 28 30">
    <path d="M14 0c8 0 14 6 14 13s-6 14-14 14c-2 0-5 0-6 1l-6 2 1-6C1 21 0 17 0 13 0 6 6 0 14 0z" fill="#333a44" />
    <path d="M8 14h12c0 4-3 6-6 6s-6-2-6-6z" fill="#fff" />
  </svg>
);

const SkyToggle = () => (
  <svg width="50" height="32" viewBox="0 0 50 32">
    <rect width="50" height="32" rx="16" fill="#4474bd" />
    <rect x="28" y="5" width="20" height="22" rx="11" fill="#f0a30a" />
    <path d="M17 9l4-4 4 4zM5 17l3-3 4 3zM14 26l4-4 3 1 4 3z" fill="#fff" />
  </svg>
);

/* ---------- data ---------- */

const tabs = ['Home', 'Import', 'Codes', 'Memos', 'Variables', 'Analysis', 'Mixed Methods', 'Visual Tools', 'Reports', 'MAXDictio', 'AI Assist', 'TeamCloud'];

const documents = [
  { level: 0, chevron: true, bullet: 'ring', icon: <DocStack />, label: 'Documents', count: 93, bold: true },
  { level: 1, chevron: true, bullet: 'diamond', icon: <Folder />, label: 'Focus Groups', count: 23 },
  { level: 2, doc: 1, label: 'NYC Data Center FG1 Questionnaire 1', count: 1 },
  { level: 2, pdf: 1, label: 'NYC Data Center FG1 Questionnaire 7', count: 3 },
  { level: 2, pdf: 1, label: 'NYC Data Center FG1 Questionnaire 14', count: 1 },
  { level: 2, doc: 1, label: 'NYC Data Center FG1 Transcript 03_17_15 11_28AM', count: 8, bold: true },
  { level: 2, doc: 1, label: 'NYC Data Center FG2 Questionnaire 9', count: 1 },
  { level: 2, pdf: 1, label: 'NYC Data Center FG2 Questionnaire 15', count: 0 },
  { level: 2, pdf: 1, label: 'NYC Data Center FG2 Questionnaire 16', count: 0 },
  { level: 2, doc: 1, label: 'NYC Data Center FG2 Transcript 03_17_15 3_31PM', count: 9 },
  { level: 1, chevron: true, bullet: 'diamond', icon: <Folder />, label: 'Interviews', count: 70 },
  { level: 2, doc: 1, label: 'Data Center Interview Transcript dec4_2014 2_02pm', count: 20 },
  { level: 2, doc: 1, label: 'Data Center Interview Transcript dec4_2014 8_52am', count: 9 },
  { level: 2, doc: 1, label: 'Data Center Interview Transcript may13_2015', count: 6 },
  { level: 2, doc: 1, label: 'Data Center Interview Transcript nov5_2014', count: 16 },
  { level: 2, doc: 1, label: 'Data Center Interview Transcript nov7_2014', count: 8 },
];

const codes = [
  { level: 0, chevron: true, icon: <CodesRoot />, label: 'Codes', count: 93, bold: true },
  { level: 1, bullet: 'diamond', selected: true, memo: true, icon: <CodeTag />, label: 'Autocode - ALL: infrastructure', count: 62 },
  { level: 1, chevron: true, icon: <CodeTag color="#2fb85c" />, label: 'Sustainability', count: 0 },
  { level: 2, icon: <CodeTag color="#2fb85c" />, label: 'Energy Efficiency', count: 10 },
  { level: 2, icon: <CodeTag color="#2fb85c" />, label: 'Water Consumption', count: 2 },
  { level: 1, icon: <CodeTag color="#eadf1b" />, label: 'Memorable Quotes', count: 0 },
  { level: 1, icon: <Marker />, label: 'RED - errors to investigate', count: 2 },
  { level: 1, icon: <CodeTag color="#a855f7" />, label: 'Budget', count: 5 },
  { level: 1, icon: <CodeTag color="#8d6e63" />, label: 'Maintenance', count: 2 },
  { level: 1, icon: <CodeTag color="#ff7043" />, label: 'Teamwork', count: 4 },
  { level: 1, icon: <CodeTag color="#78909c" />, label: 'Upgrades', count: 6 },
  { level: 0, icon: <SetsIcon />, label: 'Sets', count: 0, bold: true },
];

const paragraphs = [
  {
    n: 22,
    mt: -4,
    lines: [
      "MALE:  Right.  Right.  So this was a development at [company address].  It's bringing in, for instance, 24 megawatts of",
      'medium volt power to support four floors of data center, about a quarter-million square foot of data center.',
    ],
  },
  {
    n: 23,
    lines: [
      <>The developer that I worked for on this is actually, pretty much leases to wholesalers and retailers to come in.  <Hl>So what the</Hl></>,
      <Hl>company did was build-out the infrastructure, provide three or four megawatts of utility power per floor at about a 1.4 PUE.</Hl>,
      'And then also build-out the white space.',
    ],
  },
  {
    n: 24,
    lines: [
      'And then the company would come in.  So, for example, [a particular company] took 60,000 square feet and they came in',
      "and they installed their servers and did everything downstream from that.  So it's a company that did everything from",
      "incoming service down to the PDUs and then hand it over to a retailer or a wholesaler.  So it's really more of a retail",
      'environment.  We build it out in advance, then customers start to migrate to it.',
    ],
  },
  {
    n: 25,
    lines: ['MOD:  John, do you want to tell us about your job and what you do for the company?'],
  },
  {
    n: 26,
    lines: [
      'MALE2:  Today, I have been working with [company name] for the last year.  Prior to that I worked with [different company',
      'name] for close to 35 years.  And most of my background will be related to previous experience, but what I am doing today --',
      'I have been involved with many different types of data centers worldwide.  I did a few audits for about 45 data centers from',
      '2,000 to 65,000 square feet.  My role was energy consultant, energy engineers, senior energy engineer, and my position',
      'today consulting',
    ],
  },
];

const segments = [
  { text: 'So what the company did was build-out the infrastructure, provide three or four megawatts of utility power per floor at about a 1.4 PUE.', pos: 23 },
  { text: <SelectedText>Yeah, so I would say the environments, cost of cloud, and reliability of the infrastructure.</SelectedText>, pos: 61 },
  { text: 'My focus more is more on the infrastructure, the physical side.', pos: 94 },
];

const TreeRow = ({ item, countWidth, tinted }) => {
  const selected = item.selected || (tinted && item.level === 2);
  let icon = item.icon;
  if (item.doc) icon = <DocIcon />;
  if (item.pdf) icon = <DocIcon pdf />;
  return (
    <Row $level={item.level}>
      <ChevronSlot>{item.chevron && <Chevron />}</ChevronSlot>
      <BulletSlot>
        {item.bullet === 'ring' && <RingBullet />}
        {(item.bullet === 'diamond' || (tinted && item.level === 2)) && <Diamond />}
      </BulletSlot>
      <RowBody $selected={selected}>
        <RowIcon>{icon}</RowIcon>
        <RowLabel $bold={item.bold} $selected={selected}>{item.label}</RowLabel>
        <Count $w={countWidth} $bold={item.bold} $selected={selected}>
          {item.memo && <MemoNote />}
          <CountValue>{item.count}</CountValue>
        </Count>
      </RowBody>
    </Row>
  );
};

const Meta = ({ name, pos, mt }) => (
  <SegMeta $mt={mt}>
    <DocIcon />
    <MetaLink>{name}, Pos. {pos}</MetaLink>
    <MetaCode>
      <CodeTag />
      {'Autocode - ALL: infrastructure  (0)'}
    </MetaCode>
  </SegMeta>
);

function App() {
  return (
    <Page>
      <GlobalStyle />
      <Accent />
      <TabBar>
        {tabs.map(t => (
          <Tab key={t} $active={t === 'Analysis'}>{t}</Tab>
        ))}
        <TabActions>
          <TabAction $mr={67}><ColumnsIcon /></TabAction>
          <TabAction $mr={35}><Undo2 size={24} strokeWidth={2} /></TabAction>
          <TabAction $mr={34} $color="#4f5560"><Redo2 size={24} strokeWidth={2} /></TabAction>
          <SignIn>
            <Avatar />
            Sign in
          </SignIn>
        </TabActions>
      </TabBar>

      <Ribbon>
        <RibbonBtn $w={184}>
          <RibbonIcon><Puzzle /></RibbonIcon>
          <RibbonLabel>QTT: Questions -<br />Themes - Theories</RibbonLabel>
        </RibbonBtn>
        <Sep />
        <RibbonBtn $w={116} $ml={5}>
          <RibbonIcon><AbcMark>ABC</AbcMark><GreenLens /></RibbonIcon>
          <RibbonLabel $active>Text Search &amp;<br />Autocode</RibbonLabel>
          <LabelChevron $r={2}><Chevron size={12} color="#fff" /></LabelChevron>
        </RibbonBtn>
        <RibbonBtn $w={99}>
          <RibbonIcon><AbcMark>ABC</AbcMark><WordBars /></RibbonIcon>
          <RibbonLabel>Word<br />Explorer</RibbonLabel>
        </RibbonBtn>
        <Sep />
        <RibbonBtn $w={148}>
          <RibbonIcon><ComplexIcon /></RibbonIcon>
          <RibbonLabel>Complex Coding<br />Query</RibbonLabel>
          <LabelChevron $r={2}><Chevron size={12} color="#fff" /></LabelChevron>
        </RibbonBtn>
        <Sep />
        <RibbonBtn $w={139}>
          <RibbonIcon><CompareIcon /></RibbonIcon>
          <RibbonLabel>Compare Cases<br />&amp; Groups</RibbonLabel>
          <LabelChevron $r={3}><Chevron size={12} color="#fff" /></LabelChevron>
        </RibbonBtn>
        <Sep />
        <RibbonBtn $w={92}>
          <RibbonIcon><SummaryGridIcon /></RibbonIcon>
          <RibbonLabel>Summary<br />Grid</RibbonLabel>
        </RibbonBtn>
        <RibbonBtn $w={76}>
          <RibbonIcon><SummaryTablesIcon /></RibbonIcon>
          <RibbonLabel>Summary<br />Tables</RibbonLabel>
        </RibbonBtn>
        <RibbonBtn $w={103}>
          <RibbonIcon><SummaryExplorerIcon /></RibbonIcon>
          <RibbonLabel>Summary<br />Explorer</RibbonLabel>
        </RibbonBtn>
        <Sep />
        <RibbonList $w={238}>
          <RibbonItem><RibbonItemIcon><IntercoderIcon /></RibbonItemIcon>Intercoder Agreement</RibbonItem>
          <RibbonItem><RibbonItemIcon><SurveyIcon /></RibbonItemIcon>Categorize Survey Data</RibbonItem>
          <RibbonItem><RibbonItemIcon><FaTwitter size={22} color="#1d9bf0" /></RibbonItemIcon>Analyze Tweets</RibbonItem>
        </RibbonList>
        <Sep />
        <RibbonBtn $w={111}>
          <RibbonIcon><ParaphraseIcon /></RibbonIcon>
          <RibbonLabel>Paraphrase<CenterChevron><Chevron size={12} color="#fff" /></CenterChevron></RibbonLabel>
        </RibbonBtn>
        <Sep />
        <RibbonList $w={220}>
          <RibbonItem><RibbonItemIcon><GreenDiamond /></RibbonItemIcon>Code Patterns <Chevron size={12} color="#fff" /></RibbonItem>
          <RibbonItem><RibbonItemIcon><Activity size={24} color="#4cb651" strokeWidth={2.400} /></RibbonItemIcon>Code Frequencies</RibbonItem>
          <RibbonItem><RibbonItemIcon><Percent size={24} color="#4cb651" strokeWidth={2.600} /></RibbonItemIcon>Code Coverage <Chevron size={12} color="#fff" /></RibbonItem>
        </RibbonList>
      </Ribbon>

      <Main>
        <LeftColumn>
          <Pane $h={539}>
            <PaneHeader $h={78}>
              <SearchBox $w={270} $pl={42}><Search size={22} color="#4b5563" strokeWidth={1.800} />Documents</SearchBox>
              <RedBox $w={73} $h={46}><ActivatedDocs />15</RedBox>
              <Tool $ml={17} $w={20}><DocFilterIcon scale={0.9} /></Tool>
              <Tool $ml={50} $w={20}><PaleDoc /></Tool>
              <Tool $ml={48}><GreenPlus /></Tool>
              <Tool $ml={48} $w={22}><Gear /></Tool>
              <Tool $ml={28} $w={18}><MinusBar /></Tool>
              <Tool $ml={28} $w={22}><Popout /></Tool>
            </PaneHeader>
            <TreeWrap>
              <Tree>
                {documents.map(d => <TreeRow key={d.label} item={d} countWidth={65} tinted />)}
              </Tree>
              <ScrollTrack><ScrollThumb $h={363} /></ScrollTrack>
            </TreeWrap>
          </Pane>
          <HSplit />
          <Pane>
            <PaneHeader $h={78}>
              <SearchBox $w={273} $pl={42}><Search size={22} color="#4b5563" strokeWidth={1.800} />Codes</SearchBox>
              <RedBox $w={64} $h={42}><ActivatedCodes />1</RedBox>
              <Tool $ml={13}><CodeFilter /></Tool>
              <Tool $ml={27} $w={21}><DocFilterIcon scale={0.85} /></Tool>
              <Tool $ml={46} $w={26}><CodeAddGhost /></Tool>
              <Tool $ml={46} $w={23}><Gear /></Tool>
              <Tool $ml={27} $w={20}><MinusBar /></Tool>
              <Tool $ml={27} $w={21}><Popout /></Tool>
            </PaneHeader>
            <Tree>
              {codes.map(c => <TreeRow key={c.label} item={c} countWidth={66} />)}
            </Tree>
          </Pane>
        </LeftColumn>

        <RightColumn>
          <Pane $h={626}>
            <PaneHeader $h={78} $pl={31} $pr={42}>
              <TitleGroup>
                <TitleEdit />
                {'NYC Data Center FG1 Transcript 03_17_15 11_28AM   (577 Paragraphs)'}
              </TitleGroup>
              <SearchBox $w={226}><Search size={22} color="#4b5563" strokeWidth={1.800} />Document</SearchBox>
              <ZoomSelect defaultValue="100%"><option>100%</option></ZoomSelect>
              <Tool $ml={36} $w={22}><Upload /></Tool>
              <Tool $ml={26}><AbCheck /></Tool>
              <PanelBtn $ml={34}><PanelIcon /></PanelBtn>
              <Tool $ml={14} $w={22}><Gear /></Tool>
              <Tool $ml={28} $w={18}><MinusBar /></Tool>
              <Tool $ml={28} $w={22}><Popout /></Tool>
            </PaneHeader>
            <CodingBar $h={62} $pl={30} $pr={29}>
              <CodeSelect defaultValue="a"><option value="a">Autocode - ALL: infrastructure</option></CodeSelect>
              <Tool $ml={14}><MarkerGhost /></Tool>
              <Tool $ml={25}><MarkerGhost plus /></Tool>
              <Tool $ml={24}><MarkerGhost plus dots /></Tool>
              <Tool $ml={45}><PinkWave /></Tool>
              <Tool $ml={40}><Marker h={30} w={22} /></Tool>
              <Tool $ml={12} $w={14}><Chevron size={10} color="#444" sw={2} /></Tool>
              <Tool $ml={36}><Smile /></Tool>
              <Tool $ml={47}><GhostWindow /></Tool>
              <Tool $ml={47}><GhostLink /></Tool>
              <Tool $ml={68}><OrangeBubble /></Tool>
              <Tool $ml={46}><AiBadge /></Tool>
              <ToolbarEnd><EditToggle /></ToolbarEnd>
            </CodingBar>
            <DocArea>
              <Gutter>
                <MoreDots><Dot /><Dot /><Dot /></MoreDots>
                <CodeMark><MarkText>Autocode - ALL: infrast</MarkText><Bracket h={52} /></CodeMark>
              </Gutter>
              <DocBody>
                {paragraphs.map(p => (
                  <Paragraph key={p.n} $mt={p.mt}>
                    <ParaNumber>{p.n}</ParaNumber>
                    <ParaText>
                      {p.lines.map((l, i) => <Line key={i}>{l}</Line>)}
                    </ParaText>
                  </Paragraph>
                ))}
              </DocBody>
              <DocScroll><ScrollThumb $h={60} /></DocScroll>
              <DocMargin />
            </DocArea>
          </Pane>
          <BlueSplit />
          <Pane>
            <PaneHeader $h={72} $pl={31} $pr={42} $pb={4}>
              <SegTitle><RetrievedIcon />Retrieved Segments</SegTitle>
              <SearchBox $w={213}><Search size={22} color="#4b5563" strokeWidth={1.800} />Segments</SearchBox>
              <PanelBtn><RetrieveDoc /></PanelBtn>
              <PanelBtn><FavDoc /></PanelBtn>
              <Tool $ml={13}><PaleBubble /></Tool>
              <Tool $ml={47} $w={21}><WindowMark /></Tool>
              <Tool $ml={28} $w={21}><SparkMark /></Tool>
              <Tool $ml={47} $w={23}><AiMark /></Tool>
              <Tool $ml={26} $w={23}><DupSquares /></Tool>
              <Tool $ml={24} $w={26}><CloudMark /></Tool>
              <Tool $ml={22} $w={25}><AiBadge w={25} /></Tool>
              <Tool $ml={48}><MarkPlus /></Tool>
              <Tool $ml={45} $w={23}><Upload /></Tool>
              <Tool $ml={48} $w={23}><Gear /></Tool>
              <RedBox $ml={15} $w={44} $h={38}><MinusBar w={22} /></RedBox>
              <Tool $ml={15} $w={21}><Popout /></Tool>
            </PaneHeader>
            <SegList>
              <SegStrip>
                <Meta name="NYC Data Center FG1 Questionnaire 1" pos={3} mt={-21} />
              </SegStrip>
              <SegGroupHeader>
                <DocIcon />
                {'Focus Groups > NYC Data Center FG1 Transcript 03_17_15 11_28AM'}
              </SegGroupHeader>
              {segments.map(s => (
                <Segment key={s.pos}>
                  <SegMarker><Bracket /></SegMarker>
                  <SegContent>
                    <SegText>{s.text}</SegText>
                    <Meta name="NYC Data Center FG1 Transcript 03_17_15 11_28AM" pos={s.pos} mt={22} />
                  </SegContent>
                </Segment>
              ))}
              <Tooltip>Mode: Simple Coding Query</Tooltip>
              <SegThumb />
            </SegList>
          </Pane>
        </RightColumn>
      </Main>

      <BottomBar>
        <Dock>
          <Tool $w={22}><Sliders /></Tool>
          <Tool $ml={33} $w={28}><ChatFace /></Tool>
          <Tool $ml={30} $w={30}><FaQuestionCircle size={30} color="#333a44" /></Tool>
        </Dock>
        <DockCurve viewBox="0 0 83 61">
          <path d="M76 0C52 2 44 18 42 30C40 46 22 61 0 61L0 0Z" fill="#f5f5f5" />
        </DockCurve>
        <ThemeToggle><SkyToggle /></ThemeToggle>
      </BottomBar>
    </Page>
  );
}

export default App;
